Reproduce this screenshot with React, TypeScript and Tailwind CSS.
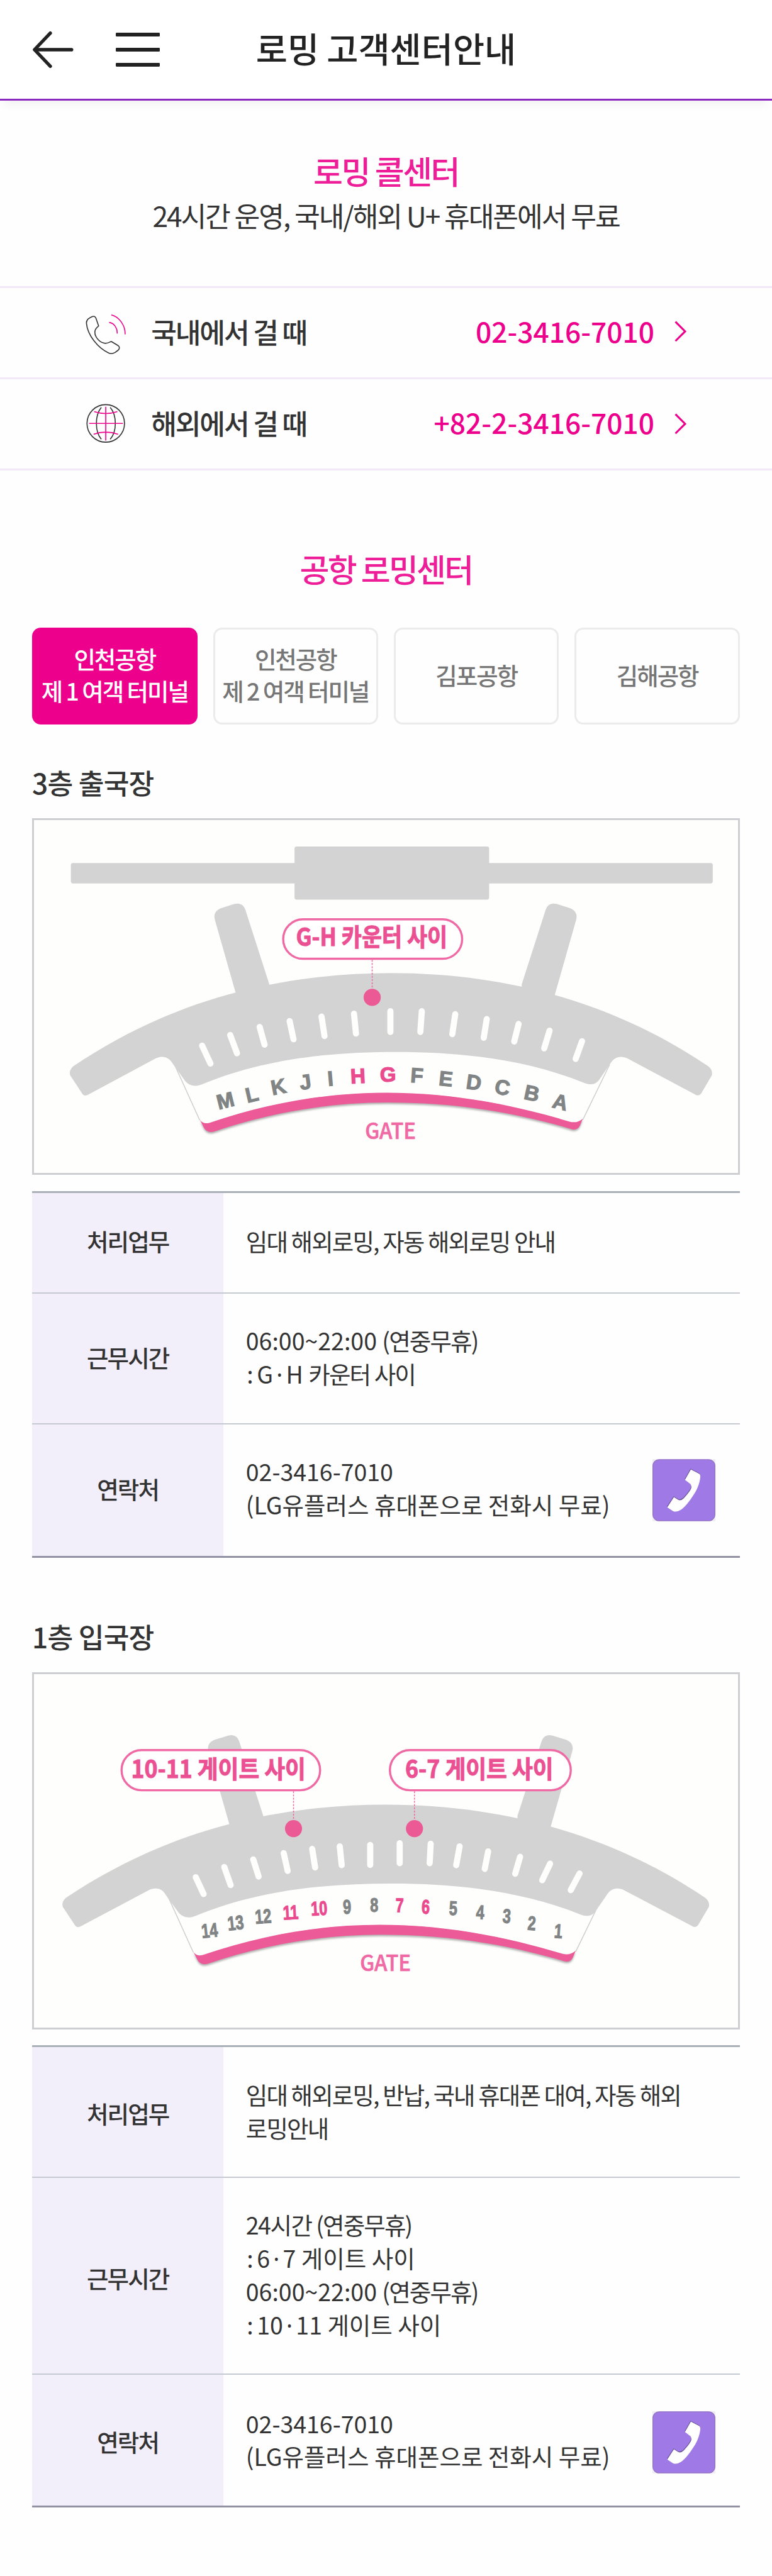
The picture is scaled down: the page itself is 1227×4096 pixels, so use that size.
import type { ReactNode } from 'react';

type Tick = [number, number, number, number];
type Mark = { t: string; x: number; y: number; r: number; on?: boolean };

function PhoneLineIcon() {
  return (
    <svg className="h-[68.2px] w-[68.2px] overflow-visible" viewBox="0 0 80 80" fill="none" strokeWidth="1.9">
      <path
        stroke="#333"
        strokeLinejoin="round"
        d="M26.7 27.3L21.7 13C20.5 9.5 17.5 8.5 14.5 10L10.5 12C5.5 14.5 3.7 18 4 22.5C6 45 26 69 45.3 77.7C49 79.4 53.5 79 57 77L62.5 73C66.3 70.2 66 66.2 63.5 64.3L50.3 56.3C48 56.5 46 59.7 39 59.7C29 59.3 19.5 48 19.7 39C19.8 31 24.5 30 26.7 27.3Z"
      />
      <path stroke="#ec008c" d="M50.3 6.7C65 10 77 27 76 43M46.3 20.7C56 22 62 32 61.3 41.5" />
    </svg>
  );
}

function GlobeIcon() {
  return (
    <svg className="h-[68.2px] w-[68.2px] overflow-visible" viewBox="0 0 80 80" fill="none" strokeWidth="1.9">
      <circle cx="40" cy="39" r="35" stroke="#333" />
      <path stroke="#333" d="M31.7 9C19.5 24 19.5 54 31.7 68.5M48.3 9C61 24 61 54 48.3 68.5" />
      <path stroke="#ec008c" d="M40 8V71M9 39H72M18.3 17Q40 24 61.7 17M17.3 59.3Q40 51.3 63 59.3" />
    </svg>
  );
}

function CallRow({ icon, label, number, chevron }: { icon: ReactNode; label: string; number: string; chevron: string }) {
  return (
    <div className="flex h-[144.9px] items-center border-t-[3px] border-[#f3e8f7] px-[133.8px] text-[44.3px] leading-[60px] font-medium">
      {icon}
      <span className="ml-[38.3px] -mt-[4px] tracking-[-0.05em] text-[#333]">{label}</span>
      <span className="-mt-[5px] mr-[31px] ml-auto text-[#ec008c]">{number}</span>
      <svg className={chevron} viewBox="0 0 26 42" fill="none">
        <path d="M3 3L21 21L3 39" stroke="#ec008c" strokeWidth="3.6" />
      </svg>
    </div>
  );
}

function Tab({ lines, active }: { lines: string[]; active?: boolean }) {
  const base =
    'flex h-[153.4px] flex-col items-center justify-center rounded-[14px] pb-[5px] text-[37.5px] leading-[51.4px] font-medium tracking-[-0.055em] whitespace-nowrap ';
  return (
    <button className={base + (active ? 'bg-[#ec008c] text-white' : 'border-[3px] border-[#ebebeb] text-[#767676]')}>
      {lines.map((l) => (
        <span key={l}>{l}</span>
      ))}
    </button>
  );
}

function Hall({ body, panel }: { body?: string; panel?: string }) {
  const leg = 'M381.8 335L340.5 190C337 178 343 171 352 167.5L377 159.8C387 157 394 161 397.5 171L442 309.8V335Z';
  return (
    <>
      <g transform={panel}>
        <path d="M264 458L312 564L661 530L1028 563L1078 460L661 420Z" fill="#fefefd" />
        <path d="M264 458L312 564M1078 460L1028 563" stroke="#cfcfcf" strokeWidth="1.8" />
        <path
          className="drop-shadow-[0_3px_2px_rgba(0,0,0,0.3)]"
          fill="#ec5a98"
          d="M312 563Q318 572 330 569C443 531 550 512.5 661 512.5C780 512.5 890 533 1004 567Q1018 570 1028 561L1023 573Q1019 583 1008 581C890 546 780 531 661 531C550 531 440 551 340 585Q328 589 321 580Z"
        />
        <path d="M330 568C443 530.5 550 512 661 512C780 512 890 532.5 1004 566L661 450Z" fill="#fefefd" />
      </g>
      <g transform={body} fill="#d3d3d3">
        <path d={leg} />
        <path d={leg} transform="translate(1355.8 0) scale(-1 1)" />
        <path d="M76 463C250 345 450 289 669 289C888 289 1088 345 1262 463Q1271 470 1269 480L1249 514Q1244 521 1236 515L1112 449C1098 442 1086 446 1078 460L1058 489C1052 497 1042 499 1030 494C920 450 800 436.5 680 436.5C550 436.5 430 450 316 497C303 502 293 500 285 491L262 459C255 446 243 442 229 449L106 515Q96 522 91 512L70 480Q67 471 76 463Z" />
      </g>
    </>
  );
}

function Ticks({ items }: { items: Tick[] }) {
  return (
    <g stroke="#fefefd" strokeWidth="11.5" strokeLinecap="round">
      {items.map(([x1, y1, x2, y2]) => (
        <line key={x1} x1={x1} y1={y1 + 2.5} x2={x2} y2={y2 - 2.5} />
      ))}
    </g>
  );
}

function Marks({ items, size, narrow }: { items: Mark[]; size: number; narrow?: boolean }) {
  return (
    <g fontSize={size} fontWeight="700" textAnchor="middle" strokeWidth="1.4" fontFamily='"Liberation Sans", sans-serif'>
      {items.map((m) => (
        <text
          key={m.t}
          transform={`translate(${m.x} ${m.y}) rotate(${m.r})${narrow ? ' scale(0.74 1)' : ''}`}
          y={size * 0.36}
          fill={m.on ? '#ea4a8e' : '#818484'}
          stroke={m.on ? '#ea4a8e' : '#818484'}
        >
          {m.t}
        </text>
      ))}
    </g>
  );
}

function Callout({ x, y, w, h, base, tx, tw, px, py, text }: {
  x: number; y: number; w: number; h: number; base: number; tx: number; tw: number; px: number; py: number; text: string;
}) {
  return (
    <g>
      <rect x={x} y={y} width={w} height={h} rx={h / 2} fill="#fff" stroke="#ef6aa4" strokeWidth="4" />
      <line x1={px} y1={y + h + 2} x2={px} y2={py} stroke="#ef6aa4" strokeWidth="1.8" strokeDasharray="3.5 2.5" />
      <circle cx={px} cy={py} r="16" fill="#ec5a96" />
      <text
        x={tx}
        y={base}
        textLength={tw}
        lengthAdjust="spacingAndGlyphs"
        fontSize="46"
        fontWeight="700"
        fill="#eb5093"
        stroke="#eb5093"
        strokeWidth="1.2"
      >
        {text}
      </text>
    </g>
  );
}

function MapBox({ label, children }: { label: string; children: ReactNode }) {
  return (
    <div className="h-[567.4px] border-[3px] border-[#cdced2] bg-[#fefefd]">
      <svg className="block h-full w-full" viewBox="3 3 1314 660" role="img" aria-label={label}>
        {children}
      </svg>
    </div>
  );
}

function GateLabel({ x, y }: { x: number; y: number }) {
  return (
    <text x={x} y={y} textLength="95" lengthAdjust="spacingAndGlyphs" fontSize="41" fontWeight="500" fill="#ef6aa4" stroke="#ef6aa4" strokeWidth="0.8">
      GATE
    </text>
  );
}

const departureTicks: Tick[] = [
  [316.5, 422.1, 332.1, 460.6], [368.9, 402.3, 381.7, 441.4], [424, 387.2, 433.2, 425.3], [480, 376.2, 487.3, 415.2],
  [539.7, 367.9, 545.2, 409.2], [600.3, 362.4, 604, 404.6], [668.3, 357.8, 668.3, 401.4], [727, 357.8, 724.3, 401.4],
  [789.5, 363.3, 784, 405.5], [848.3, 372.5, 842.8, 412.4], [907.9, 381.7, 899.7, 419.3], [965.8, 394.1, 955.7, 432.2],
  [1026.4, 413.8, 1014.5, 451.9],
];

const arrivalTicks: Tick[] = [
  [304.6, 380.1, 319.3, 416.6], [357.9, 361, 369.8, 399.7], [412, 346.8, 422.1, 383.8], [469, 335.1, 476.3, 373.2],
  [522.2, 327.2, 527.7, 366.9], [573.7, 322.4, 577.3, 362.6], [630.6, 319.8, 630.6, 362.1], [685.7, 316.6, 685.7, 358.9],
  [743.6, 317.6, 741.7, 358.9], [797.7, 322.4, 791.3, 362.6], [851, 331.9, 844.6, 369.5], [910.7, 342, 901.5, 378.5],
  [966.7, 354.7, 952, 390.7], [1021.8, 373.2, 1005.3, 409.2],
];

const counters: Mark[] = [
  { t: 'M', x: 359.7, y: 526.8, r: -14 }, { t: 'L', x: 409.3, y: 515.3, r: -13 }, { t: 'K', x: 458.9, y: 501, r: -11 },
  { t: 'J', x: 509.4, y: 491.9, r: -8 }, { t: 'I', x: 556.2, y: 485.4, r: -5 }, { t: 'H', x: 607.6, y: 480.9, r: -3, on: true },
  { t: 'G', x: 663.7, y: 477.6, r: 0, on: true }, { t: 'F', x: 717.8, y: 479.9, r: 4 }, { t: 'E', x: 772, y: 485.9, r: 6 },
  { t: 'D', x: 824.4, y: 492.8, r: 8 }, { t: 'C', x: 877.6, y: 502, r: 10 }, { t: 'B', x: 932.7, y: 513, r: 12 },
  { t: 'A', x: 986, y: 529.5, r: 14 },
];

const gates: Mark[] = [
  { t: '14', x: 330.3, y: 481.7, r: -6 }, { t: '13', x: 379, y: 467.4, r: -6 }, { t: '12', x: 430.4, y: 455.3, r: -4 },
  { t: '11', x: 481.8, y: 447.9, r: -3, on: true }, { t: '10', x: 535.1, y: 440.4, r: -3, on: true },
  { t: '9', x: 587.4, y: 437.3, r: -2 }, { t: '8', x: 638, y: 434.6, r: 0 }, { t: '7', x: 685.7, y: 434.6, r: 1, on: true },
  { t: '6', x: 734.4, y: 437.3, r: 2, on: true }, { t: '5', x: 785.8, y: 439.9, r: 2 }, { t: '4', x: 836.3, y: 447.3, r: 3 },
  { t: '3', x: 885.9, y: 454.7, r: 4 }, { t: '2', x: 932.7, y: 468, r: 4 }, { t: '1', x: 982.3, y: 482.8, r: 4 },
];

function CallButton({ className = '' }: { className?: string }) {
  const handset =
    'M71.7 19.3L87 27.3Q90 29.5 89.3 34.3C88 46 83 59 74 71C66 83 59 91 53.3 94.5Q45 100 38.3 97L27.7 90L40 71L48 76Q53 78.5 58.3 73.3Q68 63 71.7 56Q74 51 71 46.5L60.7 38.7Z';
  return (
    <svg className={'ml-auto h-[99px] w-[100px] shrink-0 ' + className} viewBox="0 0 117.5 116">
      <rect width="117.5" height="116" fill="#efedf2" />
      <rect x="0.8" y="0.8" width="115.9" height="114.4" rx="12" fill="#9f79e5" stroke="#9474c6" strokeWidth="1.6" />
      <path d={handset} fill="#4b3a70" opacity="0.7" transform="translate(-0.5 -1.6)" />
      <path d={handset} fill="#fff" />
    </svg>
  );
}

function Row({ title, className, titlePad = 'pb-[4px]', textPad = 'pb-[5px]', children, action }: {
  title: string; className: string; titlePad?: string; textPad?: string; children: ReactNode; action?: ReactNode;
}) {
  return (
    <div className={'flex text-[37.5px] leading-[52.8px] text-[#333] ' + className}>
      <div className={'flex w-[304.2px] shrink-0 items-center justify-center bg-[#f2eefa] font-medium tracking-[-0.05em] ' + titlePad}>
        {title}
      </div>
      <div className="flex flex-1 items-center pr-[39px] pl-[35.5px]">
        <div className={'whitespace-nowrap ' + textPad}>{children}</div>
        {action}
      </div>
    </div>
  );
}

function Place({ a, b, where }: { a: string; b: string; where: ReactNode }) {
  return (
    <p>
      <span className="mr-[5.5px] ml-[1.5px]">:</span>
      {a}
      <span className="inline-block w-[20.5px] text-center font-['Noto_Sans',sans-serif] leading-none">·</span>
      {b} {where}
    </p>
  );
}

const Closed = () => <span className="tracking-[-0.05em]">(연중무휴)</span>;

export default function App() {
  return (
    <div className="h-[4096px] w-[1227px] overflow-hidden bg-[#fefefe] font-['Noto_Sans_CJK_KR','Noto_Sans',sans-serif]">
      <header className="grid h-[160px] grid-cols-[1fr_auto_1fr] items-center border-b-[3px] border-[#8c28bf] bg-white shadow-[0_14px_14px_-8px_rgba(0,0,0,0.05)]">
        <div className="flex items-center pl-[51px]">
          <svg className="h-[60px] w-[66.5px]" viewBox="60 56.5 78 70" fill="none" stroke="#222">
            <path d="M94 60.5L64.5 91.5L94 122.5" strokeWidth="6.2" strokeLinecap="round" strokeLinejoin="round" />
            <path d="M66 91.5H133.5" strokeWidth="6.6" strokeLinecap="round" />
          </svg>
          <svg className="ml-[66.5px] h-[60px] w-[70px]" viewBox="216 57.5 82 70" fill="#222">
            <rect x="216" y="61" width="82" height="7" rx="1.5" />
            <rect x="216" y="89" width="82" height="7" rx="1.5" />
            <rect x="216" y="117" width="82" height="7" rx="1.5" />
          </svg>
        </div>
        <h1 className="-mt-[6px] text-[54.5px] leading-[80px] font-medium text-[#222]">로밍 고객센터안내</h1>
      </header>

      <section className="pt-[76px]">
        <h2 className="text-center text-[51px] leading-[70px] font-medium tracking-[-0.05em] text-[#ed1e98]">로밍 콜센터</h2>
        <p className="pb-[77px] text-center text-[44.3px] leading-[72px] tracking-[-0.047em] text-[#333]">
          24시간 운영, 국내/해외 U+ 휴대폰에서 무료
        </p>
        <div className="border-b-[3px] border-[#f3e8f7]">
          <CallRow icon={<PhoneLineIcon />} label="국내에서 걸 때" number="02-3416-7010" chevron="-mt-[5px] h-[35.8px] w-[22.2px]" />
          <CallRow icon={<GlobeIcon />} label="해외에서 걸 때" number="+82-2-3416-7010" chevron="h-[35.8px] w-[22.2px]" />
        </div>
      </section>

      <section className="px-[51.1px] pt-[121px]">
        <h2 className="text-center text-[51px] leading-[70px] font-medium tracking-[-0.053em] text-[#ed1e98]">공항 로밍센터</h2>
        <div className="mt-[59.5px] grid grid-cols-4 gap-[25px]">
          <Tab active lines={['인천공항', '제 1 여객 터미널']} />
          <Tab lines={['인천공항', '제 2 여객 터미널']} />
          <Tab lines={['김포공항']} />
          <Tab lines={['김해공항']} />
        </div>

        <h3 className="mt-[66.3px] mb-[30.8px] text-[44.3px] leading-[52px] font-medium tracking-[-0.018em] text-[#333]">3층 출국장</h3>
        <MapBox label="3층 출국장 지도">
          <rect x="71.3" y="83.2" width="1199.4" height="38.1" rx="4" fill="#d3d3d3" />
          <rect x="489.2" y="52.4" width="363.6" height="99.2" rx="4" fill="#d3d3d3" />
          <Hall />
          <Ticks items={departureTicks} />
          <Marks items={counters} size={39} />
          <Callout x={468} y={188.5} w={334.4} h={73.8} base={238} tx={492} tw={283} px={634.3} py={334.4} text="G-H 카운터 사이" />
          <GateLabel x={621} y={598.9} />
        </MapBox>
        <div className="mt-[25.5px] border-t-[3px] border-b-[3px] border-t-[#a9b0b8] border-b-[#9291a3]">
          <Row title="처리업무" className="h-[158px]">
            <p className="tracking-[-0.05em]">임대 해외로밍, 자동 해외로밍 안내</p>
          </Row>
          <Row title="근무시간" className="h-[208.7px] border-t-2 border-[#c5cad2]" textPad="pb-[4px]">
            <p>06:00~22:00 <Closed /></p>
            <Place a="G" b="H" where={<span className="tracking-[-0.05em]">카운터 사이</span>} />
          </Row>
          <Row title="연락처" className="h-[210.5px] border-t-2 border-[#c5cad2]" textPad="pb-[7px]" action={<CallButton />}>
            <p>02-3416-7010</p>
            <p>(LG유플러스 휴대폰으로 전화시 무료)</p>
          </Row>
        </div>

        <h3 className="mt-[99.5px] mb-[31px] text-[44.3px] leading-[52px] font-medium tracking-[-0.018em] text-[#333]">1층 입국장</h3>
        <MapBox label="1층 입국장 지도">
          <Hall body="matrix(1.0069 0 0 1 -14.3 -42)" panel="matrix(0.998 0 0 1 -11.4 -41)" />
          <Ticks items={arrivalTicks} />
          <Marks items={gates} size={37} narrow />
          <Callout x={166} y={145} w={371} h={75} base={197.5} tx={184} tw={326} px={487.3} py={291.7} text="10-11 게이트 사이" />
          <Callout x={667.4} y={145} w={338} h={75} base={197.5} tx={696} tw={277} px={713.3} py={291.7} text="6-7 게이트 사이" />
          <GateLabel x={611.5} y={557.4} />
        </MapBox>
        <div className="mt-[25.5px] border-t-[3px] border-b-[3px] border-t-[#a9b0b8] border-b-[#9291a3]">
          <Row title="처리업무" className="h-[205.4px]" titlePad="pt-[4px]" textPad="pb-[2px]">
            <p className="tracking-[-0.05em]">임대 해외로밍, 반납, 국내 휴대폰 대여, 자동 해외</p>
            <p className="tracking-[-0.05em]">로밍안내</p>
          </Row>
          <Row title="근무시간" className="h-[313.8px] border-t-2 border-[#c5cad2]" titlePad="pt-[7px]" textPad="pb-[3px]">
            <p className="tracking-[-0.04em]">24시간 <Closed /></p>
            <Place a="6" b="7" where="게이트 사이" />
            <p>06:00~22:00 <Closed /></p>
            <Place a="10" b="11" where="게이트 사이" />
          </Row>
          <Row title="연락처" className="h-[210px] border-t-2 border-[#c5cad2]" titlePad="pt-[3px]" textPad="pb-[2px]" action={<CallButton className="mt-[6px]" />}>
            <p>02-3416-7010</p>
            <p>(LG유플러스 휴대폰으로 전화시 무료)</p>
          </Row>
        </div>
      </section>
    </div>
  );
}
